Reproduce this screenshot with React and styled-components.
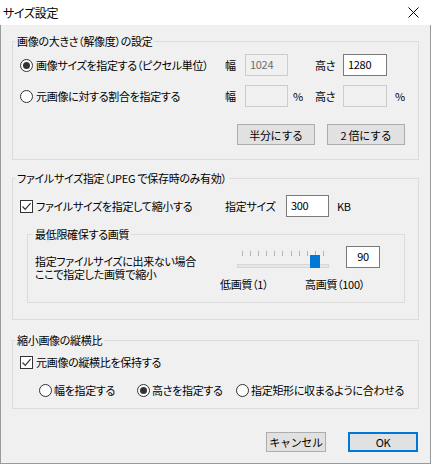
import React from 'react';
import styled, { createGlobalStyle } from 'styled-components';

const GlobalStyle = createGlobalStyle`
  body {
    margin: 0;
    background: #fff;
    font-family: "Noto Sans CJK JP", "Noto Sans", sans-serif;
    font-size: 11px;
    letter-spacing: -0.3px;
    font-feature-settings: "palt";
    color: #000;
  }
`;

const Dialog = styled.div`
  width: 431px;
  height: 464px;
  display: flex;
  flex-direction: column;
  box-sizing: border-box;
`;

const TitleBar = styled.div`
  height: 25px;
  flex: none;
  background: #fff;
  display: flex;
  align-items: center;
  justify-content: space-between;
  padding: 0 12px 0 3px;
  line-height: 14px;
  font-size: 12px;
`;

const Body = styled.div`
  flex: 1;
  background: #f0f0f0;
  border: 1px solid #9a9a9a;
  border-top: none;
  padding: 9px 11px 0 11px;
  display: flex;
  flex-direction: column;
`;

const Group = styled.fieldset`
  margin: ${(p) => p.$margin || '0'};
  padding: ${(p) => p.$pad};
  border: 1px solid #dcdcdc;
  min-width: 0;
`;

const Legend = styled.legend`
  padding: 0 2px;
  margin-left: ${(p) => p.$offset}px;
  line-height: 14px;
  white-space: nowrap;
`;

const SizeGrid = styled.div`
  display: grid;
  grid-template-columns: 205px 20px 43px 27px 28px 44px auto;
  grid-auto-rows: 22px;
  row-gap: 9px;
  align-items: center;
  white-space: nowrap;
`;

const Unit = styled.span`
  padding-left: ${(p) => p.$left || 0}px;
`;

const Option = styled.label`
  display: flex;
  align-items: center;
  gap: ${(p) => p.$gap || 3}px;
  white-space: nowrap;
  height: 22px;
`;

const Radio = styled.span`
  width: 13px;
  height: 13px;
  box-sizing: border-box;
  border: 1px solid #333;
  border-radius: 50%;
  background: #fff;
  display: inline-flex;
  align-items: center;
  justify-content: center;
  flex: none;

  &::after {
    content: '';
    display: ${(p) => (p.$checked ? 'block' : 'none')};
    width: 7px;
    height: 7px;
    border-radius: 50%;
    background: #333;
  }
`;

const CheckBox = styled.span`
  width: 13px;
  height: 13px;
  box-sizing: border-box;
  border: 1px solid #333;
  background: #fff;
  display: inline-flex;
  align-items: center;
  justify-content: center;
  flex: none;
`;

const Field = styled.input`
  width: ${(p) => p.$w}px;
  height: 22px;
  box-sizing: border-box;
  margin: 0;
  padding: 0 4px 2px;
  border: 1px solid ${(p) => (p.disabled ? '#cccccc' : '#7a7a7a')};
  background: ${(p) => (p.disabled ? '#f0f0f0' : '#fff')};
  color: ${(p) => (p.disabled ? '#6d6d6d' : '#000')};
  font-family: inherit;
  font-size: 11px;
  letter-spacing: inherit;
  text-align: ${(p) => p.$align || 'left'};
  outline: none;
`;

const ButtonRow = styled.div`
  display: flex;
  justify-content: flex-end;
  gap: ${(p) => p.$gap}px;
  margin-top: ${(p) => p.$top}px;
  padding-right: ${(p) => p.$right || 0}px;
`;

const Button = styled.button`
  width: ${(p) => p.$w}px;
  height: ${(p) => p.$h}px;
  box-sizing: border-box;
  margin: 0;
  padding: 0;
  background: #e1e1e1;
  border: ${(p) => (p.$default ? '2px solid #0078d7' : '1px solid #adadad')};
  font-family: inherit;
  font-size: 11px;
  letter-spacing: inherit;
  white-space: nowrap;
  color: #000;
`;

const FileRow = styled.div`
  display: grid;
  grid-template-columns: 205px 61px 43px auto;
  height: 22px;
  align-items: center;
  white-space: nowrap;
`;

const QualityBody = styled.div`
  display: flex;
  align-items: flex-start;
`;

const Description = styled.div`
  width: 185px;
  margin-top: 14px;
  line-height: 13px;
  white-space: nowrap;
`;

const QualityControls = styled.div`
  margin-top: 5px;
  display: flex;
  flex-direction: column;
`;

const SliderRow = styled.div`
  display: flex;
  align-items: flex-start;
  gap: 17px;
`;

const Slider = styled.div`
  position: relative;
  width: 92px;
  height: 22px;
  margin-left: 17px;
`;

const Ticks = styled.div`
  display: flex;
  justify-content: space-between;
  padding: 0 5px;
  margin-top: 5px;
  height: 5px;
`;

const Tick = styled.span`
  width: 1px;
  height: 5px;
  background: #b4b4b4;
`;

const Track = styled.div`
  margin-top: 8px;
  height: 4px;
  box-sizing: border-box;
  background: #e7e7e7;
  border: 1px solid #d6d6d6;
`;

const Thumb = styled.span`
  position: absolute;
  left: 73px;
  top: 9px;
  width: 10px;
  height: 13px;
  background: #0078d7;
`;

const ScaleLabels = styled.div`
  display: flex;
  margin-top: 9px;
  line-height: 14px;
  white-space: nowrap;
`;

const ScaleLabel = styled.span`
  width: ${(p) => (p.$w ? `${p.$w}px` : 'auto')};
`;

const RatioOptions = styled.div`
  display: grid;
  grid-template-columns: 98px 99px auto;
  margin-top: 6px;
  padding-left: 19px;
`;

const Check = () => (
  <svg width="11" height="11" viewBox="0 0 11 11">
    <path d="M1.5 5.5 L4.2 8.3 L9.6 2.2" fill="none" stroke="#333" strokeWidth="1.2" />
  </svg>
);

const CloseIcon = () => (
  <svg width="11" height="11" viewBox="0 0 11 11">
    <path d="M0.5 0.5 L10.5 10.5 M10.5 0.5 L0.5 10.5" stroke="#000" strokeWidth="1" />
  </svg>
);

const ticks = Array.from({ length: 11 });

export default function App() {
  return (
    <>
      <GlobalStyle />
      <Dialog>
        <TitleBar>
          <span>サイズ設定</span>
          <CloseIcon />
        </TitleBar>
        <Body>
          <Group $pad="6px 13px 14px 7px">
            <Legend $offset={-5}>画像の大きさ（解像度）の設定</Legend>
            <SizeGrid>
              <Option>
                <Radio $checked />
                画像サイズを指定する（ピクセル単位）
              </Option>
              <span>幅</span>
              <Field $w={43} disabled readOnly value="1024" />
              <span />
              <span>高さ</span>
              <Field $w={44} readOnly value="1280" />
              <span />

              <Option>
                <Radio />
                元画像に対する割合を指定する
              </Option>
              <span>幅</span>
              <Field $w={43} disabled readOnly value="" />
              <Unit $left={5}>%</Unit>
              <span>高さ</span>
              <Field $w={44} disabled readOnly value="" />
              <Unit $left={8}>%</Unit>
            </SizeGrid>
            <ButtonRow $gap={12} $top={17}>
              <Button $w={78} $h={21}>半分にする</Button>
              <Button $w={78} $h={21}>2 倍にする</Button>
            </ButtonRow>
          </Group>

          <Group $margin="11px 0 0" $pad="10px 13px 16px 7px">
            <Legend $offset={-5}>ファイルサイズ指定（JPEG で保存時のみ有効）</Legend>
            <FileRow>
              <Option>
                <CheckBox>
                  <Check />
                </CheckBox>
                ファイルサイズを指定して縮小する
              </Option>
              <span>指定サイズ</span>
              <Field $w={43} readOnly value="300" />
              <Unit $left={8}>KB</Unit>
            </FileRow>

            <Group $margin="10px 0 0 7px" $pad="0 7px 11px 7px">
              <Legend $offset={-2}>最低限確保する画質</Legend>
              <QualityBody>
                <Description>
                  指定ファイルサイズに出来ない場合
                  <br />
                  ここで指定した画質で縮小
                </Description>
                <QualityControls>
                  <SliderRow>
                    <Slider>
                      <Ticks>
                        {ticks.map((_, i) => (
                          <Tick key={i} />
                        ))}
                      </Ticks>
                      <Track />
                      <Thumb />
                    </Slider>
                    <Field $w={34} $align="center" readOnly value="90" />
                  </SliderRow>
                  <ScaleLabels>
                    <ScaleLabel $w={85}>低画質（1）</ScaleLabel>
                    <ScaleLabel>高画質（100）</ScaleLabel>
                  </ScaleLabels>
                </QualityControls>
              </QualityBody>
            </Group>
          </Group>

          <Group $margin="13px 0 0" $pad="4px 13px 7px 7px">
            <Legend $offset={-5}>縮小画像の縦横比</Legend>
            <Option>
              <CheckBox>
                <Check />
              </CheckBox>
              元画像の縦横比を保持する
            </Option>
            <RatioOptions>
              <Option $gap={2}>
                <Radio />
                幅を指定する
              </Option>
              <Option $gap={2}>
                <Radio $checked />
                高さを指定する
              </Option>
              <Option $gap={2}>
                <Radio />
                指定矩形に収まるように合わせる
              </Option>
            </RatioOptions>
          </Group>

          <ButtonRow $gap={22} $top={23} $right={1}>
            <Button $w={60} $h={20}>キャンセル</Button>
            <Button $w={70} $h={20} $default>OK</Button>
          </ButtonRow>
        </Body>
      </Dialog>
    </>
  );
}
